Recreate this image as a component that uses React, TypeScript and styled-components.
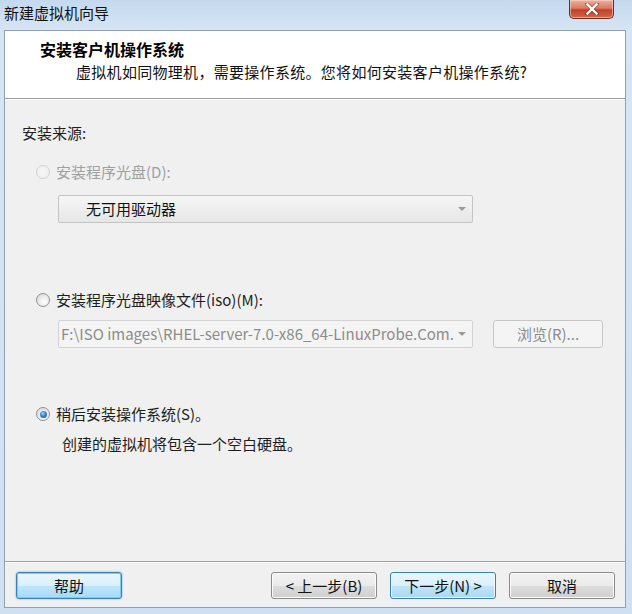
import React from "react";
import styled, { createGlobalStyle, css } from "styled-components";

const GlobalStyle = createGlobalStyle`
  html, body { margin: 0; padding: 0; }
  body {
    width: 632px;
    height: 614px;
    overflow: hidden;
    font-family: "Noto Sans CJK SC", "Noto Sans", sans-serif;
    font-size: 15px;
    color: #1e1e1e;
  }
`;

const Window = styled.div`
  width: 632px;
  height: 614px;
  box-sizing: border-box;
  display: flex;
  flex-direction: column;
  background: linear-gradient(180deg, #c4d9ef 0px, #d6e5f5 30px, #cfe0f2 100%);
`;

const TitleBar = styled.div`
  height: 30px;
  flex: none;
  display: flex;
  align-items: flex-start;
  justify-content: space-between;
`;

const TitleText = styled.div`
  padding: 3px 0 0 4px;
  font-size: 15px;
  line-height: 20px;
  color: #111;
`;

const CloseButton = styled.div`
  width: 45px;
  height: 19px;
  margin-right: 18px;
  box-sizing: border-box;
  border: 1px solid #6d2a22;
  border-top: none;
  border-radius: 0 0 5px 5px;
  background: linear-gradient(180deg, #eab0a3 0%, #d97a63 45%, #c4402a 55%, #d2664e 100%);
  box-shadow: inset 0 0 0 1px rgba(255, 220, 210, 0.55);
  display: flex;
  align-items: center;
  justify-content: center;
`;

const Client = styled.div`
  flex: 1;
  margin: 0 6px 6px 4px;
  border: 1px solid #8f9fb4;
  display: flex;
  flex-direction: column;
  background: #f0f0f0;
`;

const Header = styled.div`
  height: 68px;
  flex: none;
  background: #ffffff;
  border-bottom: 1px solid #a0a0a0;
  box-shadow: 0 1px 0 #ffffff;
  padding: 8px 0 0 35px;
  box-sizing: border-box;
`;

const HeaderTitle = styled.div`
  font-weight: 700;
  font-size: 16px;
  line-height: 20px;
  color: #000;
`;

const HeaderSub = styled.div`
  padding-left: 36px;
  margin-top: 3px;
  font-size: 15px;
  letter-spacing: 0.3px;
  line-height: 20px;
  color: #111;
`;

const Body = styled.div`
  flex: 1;
  display: flex;
  flex-direction: column;
  padding: 24px 0 0 17px;
`;

const SectionLabel = styled.div`
  line-height: 20px;
  color: #1e1e1e;
`;

const RadioRow = styled.div<{ $top: number; $disabled?: boolean }>`
  display: flex;
  align-items: center;
  gap: 6px;
  margin-top: ${(p) => p.$top}px;
  margin-left: 14px;
  line-height: 20px;
  color: ${(p) => (p.$disabled ? "#a0a0a0" : "#1e1e1e")};
`;

const RadioCircle = styled.span<{ $checked?: boolean; $disabled?: boolean }>`
  width: 14px;
  height: 14px;
  border-radius: 50%;
  box-sizing: border-box;
  flex: none;
  position: relative;
  border: 1px solid ${(p) => (p.$disabled ? "#cfcfcf" : "#929292")};
  background: ${(p) =>
    p.$disabled
      ? "radial-gradient(circle at 50% 50%, #f6f6f6 0%, #ededed 100%)"
      : "radial-gradient(circle at 60% 65%, #ffffff 0%, #e6e6e6 60%, #c9c9c9 100%)"};
  ${(p) =>
    p.$checked &&
    css`
      &::after {
        content: "";
        position: absolute;
        left: 2.5px;
        top: 2.5px;
        width: 7px;
        height: 7px;
        border-radius: 50%;
        background: radial-gradient(circle at 40% 35%, #9fd4f7 0%, #3a85c7 45%, #1b4f86 100%);
      }
    `}
`;

const Description = styled.div`
  margin-top: 10px;
  margin-left: 40px;
  line-height: 20px;
  color: #1e1e1e;
`;

const FieldRow = styled.div<{ $top: number }>`
  display: flex;
  align-items: center;
  gap: 20px;
  margin-top: ${(p) => p.$top}px;
  margin-left: 36px;
`;

const Combo = styled.div<{ $disabled?: boolean }>`
  width: 415px;
  height: 28px;
  box-sizing: border-box;
  border-radius: 2px;
  display: flex;
  align-items: center;
  justify-content: space-between;
  ${(p) =>
    p.$disabled
      ? css`
          border: 1px solid #d2d2d2;
          background: #f4f4f4;
          color: #8c8c8c;
          padding: 0 6px 0 2px;
        `
      : css`
          border: 1px solid #c4c4c4;
          background: linear-gradient(180deg, #f6f6f6 0%, #eeeeee 50%, #e6e6e6 100%);
          color: #111;
          padding: 0 6px 0 27px;
        `}
`;

const ComboText = styled.span`
  white-space: nowrap;
  overflow: hidden;
  line-height: 20px;
`;

const ComboArrow = styled.span`
  width: 0;
  height: 0;
  flex: none;
  margin-left: 4px;
  border-left: 4px solid transparent;
  border-right: 4px solid transparent;
  border-top: 4px solid #9a9a9a;
`;

const DisabledButton = styled.div`
  width: 110px;
  height: 28px;
  box-sizing: border-box;
  border: 1px solid #c3c6c9;
  border-radius: 3px;
  background: #f4f4f4;
  color: #8c8c8c;
  display: flex;
  align-items: center;
  justify-content: center;
  line-height: 20px;
`;

const Footer = styled.div`
  height: 46px;
  flex: none;
  border-top: 1px solid #a0a0a0;
  box-shadow: inset 0 1px 0 #ffffff;
  display: flex;
  align-items: flex-start;
  padding: 10px 10px 0 11px;
  box-sizing: border-box;
`;

const Spacer = styled.div`
  flex: 1;
`;

const ButtonGroup = styled.div`
  display: flex;
  gap: 13px;
`;

const Button = styled.div<{ $variant?: "focus" | "default" | "normal" }>`
  width: 106px;
  height: 27px;
  box-sizing: border-box;
  border-radius: 3px;
  display: flex;
  align-items: center;
  justify-content: center;
  line-height: 20px;
  color: #111;
  ${(p) =>
    p.$variant === "focus"
      ? css`
          border: 1px solid #3c7fb1;
          background: linear-gradient(180deg, #eaf6fd 0%, #d9f0fc 50%, #bee6fd 51%, #a7d9f5 100%);
          box-shadow: inset 0 0 0 1px #7fcbf0, 0 0 2px #5aa9e0;
        `
      : p.$variant === "default"
      ? css`
          border: 1px solid #3c7fb1;
          background: linear-gradient(180deg, #eaf6fd 0%, #d9f0fc 50%, #bee6fd 51%, #a7d9f5 100%);
          box-shadow: inset 0 0 0 1px #f0f8fd;
        `
      : css`
          border: 1px solid #8a8a8a;
          background: linear-gradient(180deg, #f2f2f2 0%, #ebebeb 50%, #dddddd 51%, #cfcfcf 100%);
          box-shadow: inset 0 0 0 1px #fbfbfb;
        `}
`;

export default function App() {
  return (
    <>
      <GlobalStyle />
      <Window>
        <TitleBar>
          <TitleText>新建虚拟机向导</TitleText>
          <CloseButton>
            <svg width="14" height="12" viewBox="0 0 14 12">
              <path
                d="M2 1 L12 11 M12 1 L2 11"
                stroke="#5a1a12"
                strokeWidth="4"
                strokeLinecap="square"
                opacity="0.45"
              />
              <path
                d="M2.5 1.5 L11.5 10.5 M11.5 1.5 L2.5 10.5"
                stroke="#ffffff"
                strokeWidth="2.4"
                strokeLinecap="square"
              />
            </svg>
          </CloseButton>
        </TitleBar>
        <Client>
          <Header>
            <HeaderTitle>安装客户机操作系统</HeaderTitle>
            <HeaderSub>虚拟机如同物理机，需要操作系统。您将如何安装客户机操作系统?</HeaderSub>
          </Header>
          <Body>
            <SectionLabel>安装来源:</SectionLabel>
            <RadioRow $top={19} $disabled>
              <RadioCircle $disabled />
              <span>安装程序光盘(D):</span>
            </RadioRow>
            <FieldRow $top={13}>
              <Combo>
                <ComboText>无可用驱动器</ComboText>
                <ComboArrow />
              </Combo>
            </FieldRow>
            <RadioRow $top={67}>
              <RadioCircle />
              <span>安装程序光盘映像文件(iso)(M):</span>
            </RadioRow>
            <FieldRow $top={10}>
              <Combo $disabled>
                <ComboText>F:\ISO images\RHEL-server-7.0-x86_64-LinuxProbe.Com.</ComboText>
                <ComboArrow />
              </Combo>
              <DisabledButton>浏览(R)...</DisabledButton>
            </FieldRow>
            <RadioRow $top={56}>
              <RadioCircle $checked />
              <span>稍后安装操作系统(S)。</span>
            </RadioRow>
            <Description>创建的虚拟机将包含一个空白硬盘。</Description>
          </Body>
          <Footer>
            <Button $variant="focus">帮助</Button>
            <Spacer />
            <ButtonGroup>
              <Button $variant="normal">&lt; 上一步(B)</Button>
              <Button $variant="default">下一步(N) &gt;</Button>
              <Button $variant="normal">取消</Button>
            </ButtonGroup>
          </Footer>
        </Client>
      </Window>
    </>
  );
}
